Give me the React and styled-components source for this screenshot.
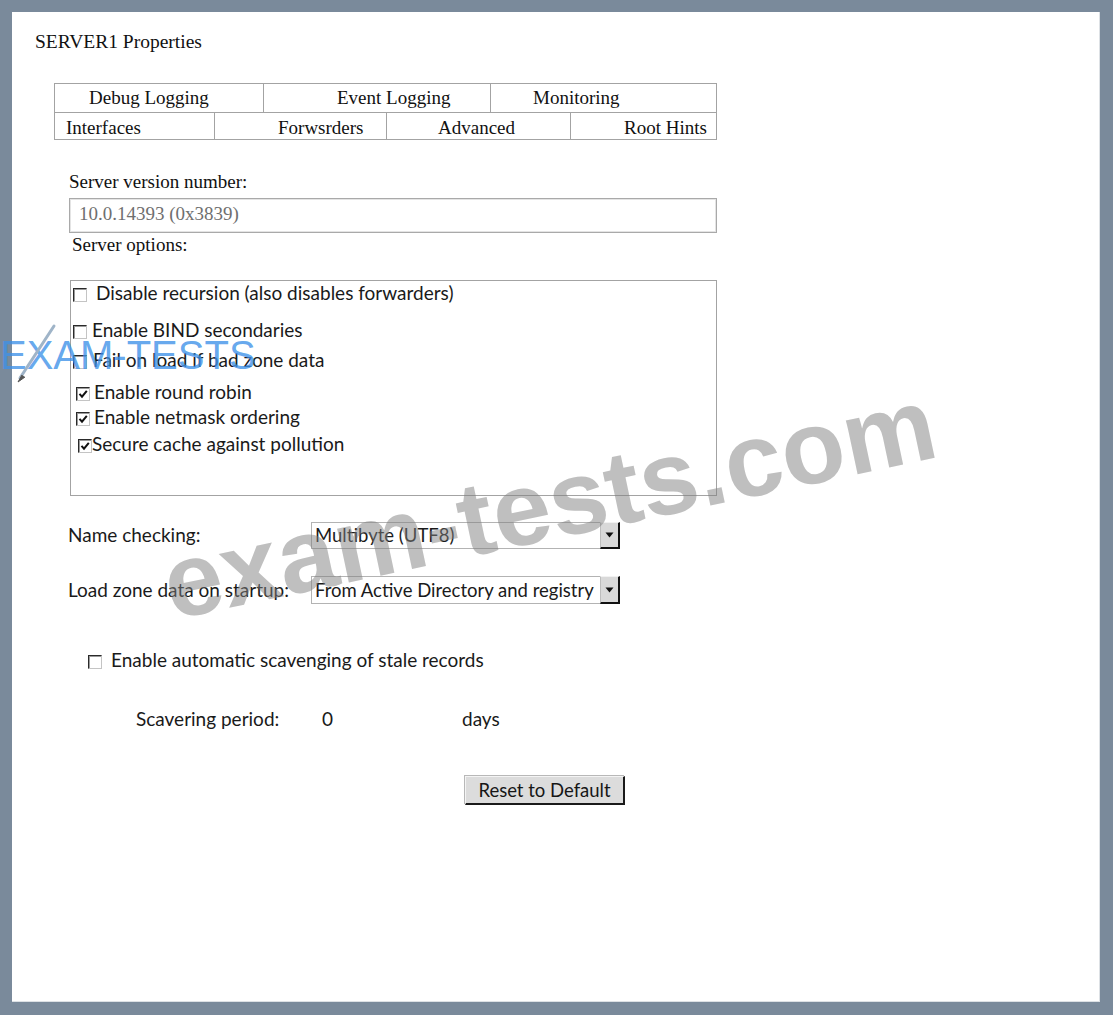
import React from 'react';
import styled, { createGlobalStyle } from 'styled-components';

const Global = createGlobalStyle`
  html, body { margin: 0; padding: 0; background: #7a8a9b; }
  body { width: 1113px; height: 1015px; overflow: hidden; }
`;

const Frame = styled.div`
  position: relative;
  box-sizing: border-box;
  width: 1113px;
  height: 1015px;
  padding: 12px 13px 13px 12px;
  overflow: hidden;
`;

const Panel = styled.div`
  box-sizing: border-box;
  width: 100%;
  height: 100%;
  background: #fff;
  padding: 18px 0 0 23px;
  box-shadow: inset -1px -1px 0 #dde1e5;
  display: flex;
  flex-direction: column;
  align-items: flex-start;
`;

const Title = styled.div`
  font-family: "Liberation Serif", "Times New Roman", serif;
  font-size: 19.5px;
  line-height: 24px;
  color: #111;
`;

const TabStrip = styled.div`
  box-sizing: border-box;
  margin: 29px 0 0 19px;
  width: 663px;
  border: 1px solid #a3a3a3;
`;

const TabRow = styled.div`
  box-sizing: border-box;
  display: grid;
  grid-template-columns: ${p => p.$cols};
  grid-template-rows: 100%;
  height: ${p => p.$h}px;
  overflow: hidden;
  border-bottom: ${p => (p.$last ? '0' : '1px solid #a3a3a3')};
`;

const Tab = styled.div`
  box-sizing: border-box;
  padding-left: ${p => p.$pad}px;
  padding-top: ${p => p.$top || 0}px;
  border-right: 1px solid #a3a3a3;
  font-family: "Liberation Serif", "Times New Roman", serif;
  font-size: 19px;
  line-height: ${p => p.$lh || 27}px;
  color: #111;
  white-space: nowrap;
  &:last-child { border-right: 0; }
`;

const Section = styled.div`
  margin-left: 34px;
  width: 648px;
  display: flex;
  flex-direction: column;
  align-items: flex-start;
`;

const SerifLabel = styled.div`
  font-family: "Liberation Serif", "Times New Roman", serif;
  font-size: 19px;
  line-height: 24px;
  color: #111;
  margin-top: ${p => p.$top || 0}px;
  margin-left: ${p => p.$left || 0}px;
`;

const VersionBox = styled.div`
  box-sizing: border-box;
  margin-top: 4px;
  width: 648px;
  height: 35px;
  border: 1px solid #a9a9a9;
  box-shadow: inset 0 0 0 1px #e4e4e4;
  padding-left: 9px;
  font-family: "Liberation Serif", "Times New Roman", serif;
  font-size: 19px;
  line-height: 30px;
  color: #6f6f6f;
`;

const OptionsBox = styled.div`
  box-sizing: border-box;
  margin: 23px 0 0 1px;
  width: 647px;
  height: 216px;
  border: 1px solid #a3a3a3;
  display: flex;
  flex-direction: column;
`;

const CheckRow = styled.label`
  display: flex;
  align-items: center;
  height: 22px;
  margin-top: ${p => p.$top || 0}px;
  padding-left: ${p => p.$pad || 0}px;
  gap: ${p => p.$gap || 0}px;
  font-family: Lato, "Noto Sans", sans-serif;
  font-size: 19px;
  line-height: 22px;
  color: #1a1a1a;
  white-space: nowrap;
`;

const Box = styled.span`
  box-sizing: border-box;
  flex: none;
  width: 14px;
  height: 14px;
  margin-top: 3px;
  background: #fff;
  border: 1px solid;
  border-color: #2a2a2a #c4c4c4 #c4c4c4 #2a2a2a;
  box-shadow: inset 1px 1px 0 #9a9a9a;
  display: flex;
  align-items: center;
  justify-content: center;
`;

const Lower = styled.div`
  margin-left: 33px;
  display: flex;
  flex-direction: column;
  align-items: flex-start;
`;

const FieldGrid = styled.div`
  margin-top: 26px;
  display: grid;
  grid-template-columns: 243px 309px;
  row-gap: 27px;
  align-items: center;
`;

const SansLabel = styled.div`
  font-family: Lato, "Noto Sans", sans-serif;
  font-size: 19px;
  line-height: 22px;
  margin-top: ${p => p.$lift ? -p.$lift * 2 : 0}px;
  color: #1a1a1a;
  white-space: nowrap;
`;

const Select = styled.div`
  box-sizing: border-box;
  display: flex;
  width: 309px;
  height: ${p => p.$h}px;
  border: 1px solid #b3b3b3;
  border-right: 0;
`;

const SelectValue = styled.div`
  flex: 1;
  min-width: 0;
  overflow: hidden;
  padding-left: 3px;
  font-family: Lato, "Noto Sans", sans-serif;
  font-size: 18.5px;
  line-height: ${p => p.$h - 2}px;
  color: #1a1a1a;
  white-space: nowrap;
`;

const DropButton = styled.div`
  box-sizing: border-box;
  flex: none;
  width: 20px;
  margin-top: -1px;
  margin-bottom: -1px;
  background: #d9d9d9;
  border: 1px solid;
  border-color: #f2f2f2 #111 #111 #bdbdbd;
  border-right-width: 2px;
  border-bottom-width: 2px;
  display: flex;
  align-items: center;
  justify-content: center;
`;

const ScavengeRow = styled(CheckRow)`
  margin-top: 45px;
  padding-left: 20px;
  gap: 9px;
`;

const PeriodRow = styled.div`
  margin: 37px 0 0 68px;
  display: grid;
  grid-template-columns: 186px 140px auto;
  font-family: Lato, "Noto Sans", sans-serif;
  font-size: 19px;
  line-height: 22px;
  color: #1a1a1a;
`;

const ResetButton = styled.button`
  box-sizing: border-box;
  margin: 46px 0 0 397px;
  width: 160px;
  height: 29px;
  padding: 0;
  background: #dcdcdc;
  border: 1px solid;
  border-color: #f4f4f4 #1a1a1a #1a1a1a #f4f4f4;
  border-right-width: 2px;
  border-bottom-width: 2px;
  box-shadow: -1px -1px 0 #b8b8b8;
  font-family: Lato, "Noto Sans", sans-serif;
  font-size: 18.5px;
  line-height: 25px;
  color: #161616;
`;

const Watermark = styled.div`
  position: absolute;
  left: 172px;
  top: 532px;
  transform-origin: 0 88px;
  transform: rotate(-12deg);
  font-family: "Liberation Sans", Arial, sans-serif;
  font-weight: 700;
  font-size: 104px;
  line-height: 104px;
  color: rgba(128, 128, 128, 0.5);
  white-space: nowrap;
  pointer-events: none;
`;

const Logo = styled.div`
  position: absolute;
  left: 0;
  top: 335px;
  font-family: "Liberation Sans", Arial, sans-serif;
  font-size: 40px;
  line-height: 40px;
  color: rgba(62, 145, 232, 0.8);
  white-space: nowrap;
  pointer-events: none;
`;

const Pencil = styled.svg`
  position: absolute;
  left: 14px;
  top: 322px;
  pointer-events: none;
`;

const Tick = () => (
  <svg width="10" height="10" viewBox="0 0 10 10">
    <path d="M1.5 4.8 L4 7.6 L8.8 1.8" fill="none" stroke="#111" strokeWidth="2" />
  </svg>
);

const Checkbox = ({ checked }) => <Box>{checked && <Tick />}</Box>;

const Arrow = () => (
  <svg width="9" height="6" viewBox="0 0 9 6">
    <path d="M0.5 0.5 H8.5 L4.5 5.5 Z" fill="#111" />
  </svg>
);

const tabsTop = [
  { label: 'Debug Logging', pad: 34 },
  { label: 'Event Logging', pad: 73 },
  { label: 'Monitoring', pad: 42 },
];
const tabsBottom = [
  { label: 'Interfaces', pad: 11 },
  { label: 'Forwsrders', pad: 63 },
  { label: 'Advanced', pad: 51 },
  { label: 'Root Hints', pad: 53 },
];

const options = [
  { label: 'Disable recursion (also disables forwarders)', checked: false, top: 1, pad: 2, gap: 9 },
  { label: 'Enable BIND secondaries', checked: false, top: 15, pad: 2, gap: 5 },
  { label: 'Fail on load if bad zone data', checked: false, top: 8, pad: 2, gap: 6 },
  { label: 'Enable round robin', checked: true, top: 10, pad: 5, gap: 4 },
  { label: 'Enable netmask ordering', checked: true, top: 3, pad: 5, gap: 4 },
  { label: 'Secure cache against pollution', checked: true, top: 5, pad: 7, gap: 0 },
];

export default function App() {
  return (
    <Frame>
      <Global />
      <Panel>
        <Title>SERVER1 Properties</Title>
        <TabStrip>
          <TabRow $cols="209px 227px 1fr" $h={29}>
            {tabsTop.map(t => (
              <Tab key={t.label} $pad={t.pad}>{t.label}</Tab>
            ))}
          </TabRow>
          <TabRow $cols="160px 172px 184px 1fr" $h={26} $last>
            {tabsBottom.map(t => (
              <Tab key={t.label} $pad={t.pad} $top={4} $lh={22}>{t.label}</Tab>
            ))}
          </TabRow>
        </TabStrip>

        <Section>
          <SerifLabel $top={30}>Server version number:</SerifLabel>
          <VersionBox>10.0.14393 (0x3839)</VersionBox>
          <SerifLabel $left={3}>Server options:</SerifLabel>
          <OptionsBox>
            {options.map(o => (
              <CheckRow key={o.label} $top={o.top} $pad={o.pad} $gap={o.gap}>
                <Checkbox checked={o.checked} />
                <span>{o.label}</span>
              </CheckRow>
            ))}
          </OptionsBox>
        </Section>

        <Lower>
          <FieldGrid>
            <SansLabel $lift={1}>Name checking:</SansLabel>
            <Select $h={27}>
              <SelectValue $h={27}>Multibyte (UTF8)</SelectValue>
              <DropButton><Arrow /></DropButton>
            </Select>
            <SansLabel>Load zone data on startup:</SansLabel>
            <Select $h={28}>
              <SelectValue $h={28}>From Active Directory and registry</SelectValue>
              <DropButton><Arrow /></DropButton>
            </Select>
          </FieldGrid>

          <ScavengeRow>
            <Checkbox checked={false} />
            <span>Enable automatic scavenging of stale records</span>
          </ScavengeRow>

          <PeriodRow>
            <span>Scavering period:</span>
            <span>0</span>
            <span>days</span>
          </PeriodRow>

          <ResetButton type="button">Reset to Default</ResetButton>
        </Lower>
      </Panel>

      <Logo>EXAM-TESTS</Logo>
      <Pencil width="46" height="62" viewBox="0 0 46 62">
        <path d="M40 4 L6 56" stroke="#9fb4c8" strokeWidth="3" strokeLinecap="round" />
        <path d="M8 53 L4 60 L11 55" fill="#555" stroke="#555" strokeWidth="1" />
      </Pencil>
      <Watermark>exam-tests.com</Watermark>
    </Frame>
  );
}
